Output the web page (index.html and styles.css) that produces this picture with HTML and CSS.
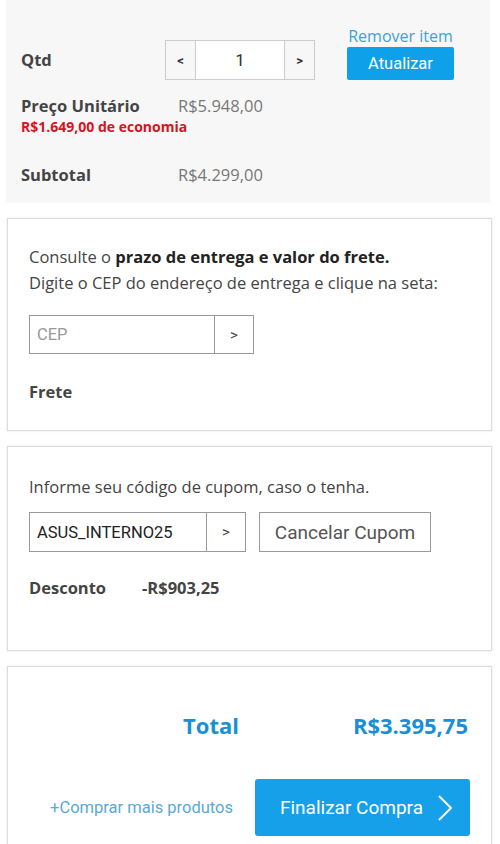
FILE: index.html
```html
<!DOCTYPE html>
<html>
<head>
  <title>Carrinho</title>
  <link rel="stylesheet" href="styles.css">
</head>
<body>
  <div class="item-panel">
    <div class="qty-row">
      <span class="label qty-label">Qtd</span>
      <div class="qty-control">
        <button class="qty-btn">&lt;</button>
        <input class="qty-input" type="text" value="1">
        <button class="qty-btn">&gt;</button>
      </div>
      <div class="item-actions">
        <a class="remove-link" href="#">Remover item</a>
        <button class="update-btn">Atualizar</button>
      </div>
    </div>

    <div class="price-row">
      <span class="label">Preço Unitário</span>
      <span class="value">R$5.948,00</span>
    </div>
    <div class="saving">R$1.649,00 de economia</div>

    <div class="price-row subtotal-row">
      <span class="label">Subtotal</span>
      <span class="value">R$4.299,00</span>
    </div>
  </div>

  <div class="card shipping">
    <p class="card-text">Consulte o <strong>prazo de entrega e valor do frete.</strong><br>
      Digite o CEP do endereço de entrega e clique na seta:</p>
    <div class="field cep-field">
      <input class="field-input" type="text" placeholder="CEP">
      <button class="field-btn">&gt;</button>
    </div>
    <div class="label card-label">Frete</div>
  </div>

  <div class="card coupon">
    <p class="card-text">Informe seu código de cupom, caso o tenha.</p>
    <div class="coupon-row">
      <div class="field coupon-field">
        <input class="field-input" type="text" value="ASUS_INTERNO25">
        <button class="field-btn">&gt;</button>
      </div>
      <button class="cancel-btn">Cancelar Cupom</button>
    </div>
    <div class="discount-row">
      <span class="label discount-label">Desconto</span>
      <span class="label">-R$903,25</span>
    </div>
  </div>

  <div class="card summary">
    <div class="total-row">
      <span class="total-label">Total</span>
      <span class="total-value">R$3.395,75</span>
    </div>
    <div class="checkout-row">
      <a class="more-link" href="#">+Comprar mais produtos</a>
      <button class="checkout-btn">Finalizar Compra
        <svg width="16" height="28" viewBox="0 0 16 28"><polyline points="2,2 14,14 2,26" fill="none" stroke="#fff" stroke-width="2"/></svg>
      </button>
    </div>
  </div>
</body>
</html>
```

FILE: styles.css
```css
body {
  margin: 0;
  padding: 0 8px 0 7px;
  font-family: "Open Sans", Arial, sans-serif;
  color: #444;
  background-color: #fff;
}

button,
input {
  font-family: Roboto, Arial, sans-serif;
}

.item-panel {
  margin-left: -1px;
  margin-right: 2px;
  padding: 27px 0 18px 15px;
  background-color: #f7f7f7;
}

.label {
  font-size: 16.5px;
  font-weight: bold;
  color: #444;
  line-height: 20px;
}

.value {
  font-size: 16.5px;
  color: #777;
  line-height: 20px;
}

.qty-row {
  display: flex;
  align-items: flex-end;
}

.qty-label {
  width: 144px;
  line-height: 40px;
}

.qty-control {
  display: flex;
  height: 40px;
  border: 1px solid #ccc;
  box-sizing: border-box;
}

.qty-btn {
  width: 29px;
  padding: 0;
  border: none;
  background-color: #f7f7f7;
  font-size: 13px;
  font-weight: bold;
  color: #333;
}

.qty-input {
  width: 88px;
  border: none;
  border-left: 1px solid #ccc;
  border-right: 1px solid #ccc;
  text-align: center;
  font-size: 17px;
  color: #333;
  padding: 0;
}

.item-actions {
  display: flex;
  flex-direction: column;
  align-items: center;
  width: 107px;
  margin-left: 32px;
}

.remove-link {
  font-size: 16px;
  line-height: 18px;
  color: #3fa2d6;
  text-decoration: none;
  margin-bottom: 2px;
}

.update-btn {
  width: 107px;
  height: 33px;
  border: none;
  border-radius: 2px;
  background-color: #0ea1ea;
  color: #fff;
  font-size: 16.5px;
}

.price-row {
  display: flex;
  margin-top: 16px;
}

.price-row .label {
  width: 157px;
}

.saving {
  font-size: 14px;
  font-weight: bold;
  color: #d9121f;
  line-height: 16px;
  margin-top: 3px;
}

.subtotal-row {
  margin-top: 30px;
}

.card {
  margin-top: 15px;
  border: 1px solid #ddd;
  box-shadow: 0 0 2px rgba(0, 0, 0, 0.12);
  padding: 0 22px 0 21px;
}

.card-text {
  margin: 0;
  font-size: 16.5px;
  line-height: 26px;
  color: #444;
}

.card-text strong {
  color: #222;
}

.shipping {
  padding-top: 25px;
  padding-bottom: 28px;
}

.field {
  display: flex;
  height: 39px;
  border: 1px solid #999;
  box-sizing: border-box;
  background-color: #fff;
}

.cep-field {
  width: 225px;
  margin-top: 19px;
}

.field-input {
  flex: 1;
  min-width: 0;
  border: none;
  padding: 0 7px;
  font-size: 16.5px;
  color: #222;
}

.field-input::placeholder {
  color: #999;
}

.field-btn {
  width: 39px;
  border: none;
  border-left: 1px solid #999;
  background-color: #fff;
  font-size: 15px;
  color: #444;
  padding: 0;
}

.card-label {
  margin-top: 28px;
}

.coupon {
  padding-top: 27px;
  padding-bottom: 52px;
}

.coupon-row {
  display: flex;
  margin-top: 12px;
}

.coupon-field {
  width: 217px;
  height: 40px;
}

.coupon-field .field-btn {
  width: 39px;
}

.cancel-btn {
  width: 172px;
  height: 40px;
  margin-left: 13px;
  border: 1px solid #999;
  background-color: #fff;
  font-size: 19px;
  color: #555;
}

.discount-row {
  display: flex;
  margin-top: 26px;
}

.discount-label {
  width: 113px;
}

.summary {
  padding: 43px 21px 8px 21px;
}

.total-row {
  display: flex;
  justify-content: flex-end;
  align-items: center;
  padding-right: 2px;
  line-height: 30px;
  color: #1b8fd3;
  font-weight: bold;
  font-size: 22px;
}

.total-value {
  width: 229px;
  text-align: right;
}

.checkout-row {
  display: flex;
  justify-content: flex-end;
  align-items: center;
  margin-top: 39px;
}

.more-link {
  font-family: Roboto, Arial, sans-serif;
  font-size: 16.5px;
  color: #5aa9d6;
  text-decoration: none;
  margin-right: 22px;
}

.checkout-btn {
  display: flex;
  align-items: center;
  justify-content: center;
  gap: 14px;
  width: 215px;
  height: 57px;
  border: none;
  border-radius: 3px;
  background-color: #16a0ea;
  color: #fff;
  font-size: 19px;
  padding: 0 0 0 8px;
}
```
